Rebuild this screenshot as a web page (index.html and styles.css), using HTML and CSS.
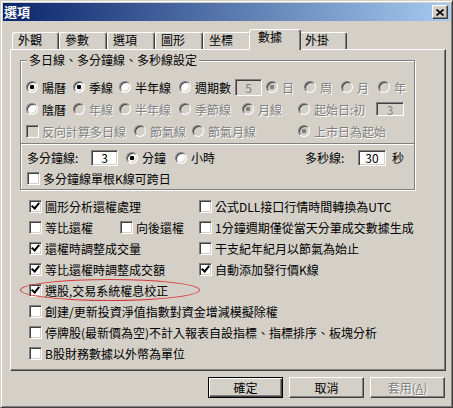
FILE: index.html
```html
<!DOCTYPE html>
<html lang="zh-Hant">
<head>
  <meta charset="UTF-8" />
  <title>選項</title>
  <link rel="stylesheet" href="styles.css">
</head>
<body>
  <div class="window">
    <div class="titlebar">
      <span class="title">選項</span>
      <button class="close" type="button">
        <svg width="8" height="7" viewBox="0 0 8 7"><path d="M0.5 0.5l7 6M7.5 0.5l-7 6" stroke="#000" stroke-width="1.6" fill="none"/></svg>
      </button>
    </div>

    <div class="dialog">
      <div class="tabs">
        <div class="tab first">外觀</div>
        <div class="tab">參數</div>
        <div class="tab">選項</div>
        <div class="tab">圖形</div>
        <div class="tab">坐標</div>
        <div class="tab active">數據</div>
        <div class="tab">外掛</div>
      </div>

      <div class="panel">
        <div class="group">
          <div class="group-title">多日線、多分鐘線、多秒線設定</div>
          <div class="group-body">
            <div class="row">
              <label class="opt w47"><span class="radio on"></span>陽曆</label>
              <label class="opt w46"><span class="radio on"></span>季線</label>
              <label class="opt w60"><span class="radio"></span>半年線</label>
              <label class="opt w56"><span class="radio"></span>週期數</label>
              <input class="edit edit-days" type="text" value="5" disabled>
              <label class="opt off w38"><span class="radio on"></span>日</label>
              <label class="opt off w37"><span class="radio"></span>周</label>
              <label class="opt off w37"><span class="radio"></span>月</label>
              <label class="opt off"><span class="radio"></span>年</label>
            </div>
            <div class="row">
              <label class="opt w47"><span class="radio"></span>陰曆</label>
              <label class="opt off w46"><span class="radio"></span>年線</label>
              <label class="opt off w60"><span class="radio"></span>半年線</label>
              <label class="opt off w63"><span class="radio"></span>季節線</label>
              <label class="opt off w56"><span class="radio on"></span>月線</label>
              <label class="opt off w78"><span class="radio"></span>起始日:初</label>
              <input class="edit edit-start" type="text" value="3" disabled>
            </div>
            <div class="row">
              <label class="opt box off w108"><span class="check"></span>反向計算多日線</label>
              <label class="opt off w58"><span class="radio"></span>節氣線</label>
              <label class="opt off w106"><span class="radio"></span>節氣月線</label>
              <label class="opt off"><span class="radio on"></span>上市日為起始</label>
            </div>
            <div class="sep"></div>
            <div class="row short">
              <span class="field-label w64">多分鐘線:</span>
              <input class="edit edit-min" type="text" value="3">
              <label class="opt w49"><span class="radio on"></span>分鐘</label>
              <label class="opt"><span class="radio"></span>小時</label>
              <span class="field-label sec-label">多秒線:</span>
              <input class="edit edit-sec" type="text" value="30">
              <span class="unit">秒</span>
            </div>
            <div class="row short">
              <label class="opt box indent"><span class="check"></span>多分鐘線單根K線可跨日</label>
            </div>
          </div>
        </div>

        <div class="checklist">
          <label class="item"><span class="check on"></span>圖形分析還權處理</label>
          <label class="item"><span class="check"></span>公式DLL接口行情時間轉換為UTC</label>

          <div class="cell">
            <label class="item w91"><span class="check"></span>等比還權</label>
            <label class="item"><span class="check"></span>向後還權</label>
          </div>
          <label class="item"><span class="check"></span>1分鐘週期僅從當天分筆成交數據生成</label>

          <label class="item"><span class="check on"></span>還權時調整成交量</label>
          <label class="item"><span class="check"></span>干支紀年紀月以節氣為始止</label>

          <label class="item"><span class="check on"></span>等比還權時調整成交額</label>
          <label class="item"><span class="check on"></span>自動添加發行價K線</label>

          <label class="item wide"><span class="check on"></span>選股,交易系統權息校正</label>
          <label class="item wide"><span class="check"></span>創建/更新投資淨值指數對資金增減模擬除權</label>
          <label class="item wide"><span class="check"></span>停牌股(最新價為空)不計入報表自設指標、指標排序、板塊分析</label>
          <label class="item wide"><span class="check"></span>B股財務數據以外幣為單位</label>

          <div class="mark"></div>
        </div>
      </div>

      <div class="buttons">
        <button class="btn default" type="button">確定</button>
        <button class="btn" type="button">取消</button>
        <button class="btn" type="button" disabled>套用(<u>A</u>)</button>
      </div>
    </div>
  </div>
</body>
</html>
```

FILE: styles.css
```css
body {
  margin: 0;
  font-family: "Noto Sans CJK TC", sans-serif;
  font-size: 12px;
  color: #000;
  background: #d4d0c8;
}
.window {
  width: 453px;
  height: 408px;
  box-sizing: border-box;
  padding: 2px;
  border: 1px solid;
  border-color: #d4d0c8 #404040 #404040 #d4d0c8;
  box-shadow: inset 1px 1px 0 #fff, inset -1px -1px 0 #808080;
  background: #d4d0c8;
}
.titlebar {
  height: 18px;
  display: flex;
  align-items: center;
  justify-content: space-between;
  padding: 0 2px 0 1px;
  background: linear-gradient(to right, #0a246a, #a6caf0);
}
.title {
  color: #fff;
  font-weight: bold;
  font-size: 13px;
  line-height: 16px;
}
.close {
  width: 16px;
  height: 14px;
  padding: 0;
  display: flex;
  align-items: center;
  justify-content: center;
  background: #d4d0c8;
  border: 1px solid;
  border-color: #fff #404040 #404040 #fff;
  box-shadow: inset -1px -1px 0 #808080;
}
.dialog {
  padding: 8px 4px 0 7px;
}

/* tabs */
.tabs {
  display: flex;
  align-items: flex-end;
  height: 20px;
  padding-left: 2px;
}
.tab {
  width: 48px;
  height: 17px;
  box-sizing: border-box;
  padding: 0 0 0 5px;
  line-height: 14px;
  white-space: nowrap;
  border: 1px solid;
  border-bottom: none;
  border-color: #fff #404040 #fff #fff;
  border-radius: 3px 3px 0 0;
  box-shadow: inset -1px 0 0 #808080;
  background: #d4d0c8;
}
.tab.first {
  width: 47px;
}
.tab.active {
  position: relative;
  z-index: 1;
  width: 52px;
  height: 21px;
  margin: 0 -2px -1px;
  padding-left: 8px;
}

/* panel */
.panel {
  height: 322px;
  box-sizing: border-box;
  padding: 10px 0 0 9px;
  border: 1px solid;
  border-color: #fff #404040 #404040 #fff;
  box-shadow: inset -1px -1px 0 #808080;
}
.group {
  width: 395px;
  height: 130px;
  box-sizing: border-box;
  border: 1px solid #808080;
  box-shadow: 1px 1px 0 #fff, inset 1px 1px 0 #fff;
}
.group-title {
  width: max-content;
  margin: -9px 0 0 6px;
  padding: 0 2px;
  line-height: 16px;
  background: #d4d0c8;
}
.group-body {
  padding: 8px 0 0 5px;
}
.row {
  display: flex;
  align-items: center;
  height: 22px;
  white-space: nowrap;
}
.row.short {
  height: 21px;
}
.sep {
  margin: 1px 0 2px -5px;
  border-top: 1px solid #808080;
  border-bottom: 1px solid #fff;
}

.opt {
  display: flex;
  align-items: center;
  gap: 4px;
  flex: none;
}
.opt.box {
  gap: 3px;
}
.opt.indent {
  margin-left: 1px;
}
.off {
  color: #808080;
  text-shadow: 1px 1px 0 #fff;
}
.w37 { width: 37px; }
.w38 { width: 38px; }
.w46 { width: 46px; }
.w47 { width: 47px; }
.w49 { width: 49px; }
.w56 { width: 56px; }
.w58 { width: 58px; }
.w60 { width: 60px; }
.w63 { width: 63px; }
.w64 { width: 64px; }
.w78 { width: 78px; }
.w91 { width: 91px; }
.w106 { width: 106px; }
.w108 { width: 108px; }

.radio {
  width: 12px;
  height: 12px;
  box-sizing: border-box;
  flex: none;
  border-radius: 50%;
  border: 1px solid;
  border-color: #808080 #fff #fff #808080;
  box-shadow: inset 1px 1px 0 #404040, inset -1px -1px 0 #d4d0c8;
  background: #fff;
}
.radio.on {
  background: radial-gradient(circle, #000 0 2px, #fff 2.6px);
}
.off .radio {
  background: #d4d0c8;
}
.off .radio.on {
  background: radial-gradient(circle, #808080 0 2px, #d4d0c8 2.6px);
}
.check {
  position: relative;
  width: 13px;
  height: 13px;
  box-sizing: border-box;
  flex: none;
  border: 1px solid;
  border-color: #808080 #fff #fff #808080;
  box-shadow: inset 1px 1px 0 #404040, inset -1px -1px 0 #d4d0c8;
  background: #fff;
}
.off .check {
  background: #d4d0c8;
}
.check.on::after {
  content: "";
  position: absolute;
  left: 3px;
  top: 0;
  width: 3px;
  height: 6px;
  border: solid #000;
  border-width: 0 2px 2px 0;
  transform: rotate(40deg);
}

/* edit fields */
.edit {
  box-sizing: border-box;
  flex: none;
  padding: 0;
  font: inherit;
  line-height: 12px;
  text-align: center;
  color: #000;
  border: 1px solid;
  border-color: #808080 #fff #fff #808080;
  box-shadow: inset 1px 1px 0 #404040, inset -1px -1px 0 #d4d0c8;
  background: #fff;
}
.edit:disabled {
  color: #808080;
  background: #d4d0c8;
}
.edit-days {
  width: 27px;
  height: 17px;
  margin-right: 4px;
}
.edit-start {
  width: 28px;
  height: 14px;
}
.edit-min {
  width: 27px;
  height: 16px;
  margin-right: 8px;
}
.edit-sec {
  width: 28px;
  height: 16px;
}
.field-label {
  flex: none;
}
.row .field-label.w64 {
  margin-left: 1px;
}
.sec-label {
  width: 53px;
  margin-left: auto;
}
.unit {
  margin: 0 10px 0 6px;
}

/* check list */
.checklist {
  position: relative;
  margin-top: 6px;
  padding-left: 9px;
  display: grid;
  grid-template-columns: 170px 1fr;
  grid-auto-rows: 21px;
  white-space: nowrap;
}
.cell {
  display: flex;
}
.item {
  display: flex;
  align-items: center;
  gap: 3px;
}
.item.wide {
  grid-column: 1 / -1;
}
.mark {
  position: absolute;
  left: 0;
  top: 83px;
  width: 180px;
  height: 22px;
  box-sizing: border-box;
  border: 1px solid #d83a3a;
  border-radius: 50%;
  pointer-events: none;
}

/* buttons */
.buttons {
  display: flex;
  justify-content: flex-end;
  gap: 6px;
  margin-top: 6px;
  padding-right: 1px;
}
.btn {
  width: 75px;
  height: 21px;
  padding: 0;
  font: inherit;
  color: #000;
  background: #d4d0c8;
  border: 1px solid;
  border-color: #fff #404040 #404040 #fff;
  box-shadow: inset -1px -1px 0 #808080;
}
.btn.default {
  border-color: #000;
  box-shadow: inset 1px 1px 0 #fff, inset -1px -1px 0 #404040, inset -2px -2px 0 #808080;
}
.btn:disabled {
  color: #808080;
  text-shadow: 1px 1px 0 #fff;
}
```
